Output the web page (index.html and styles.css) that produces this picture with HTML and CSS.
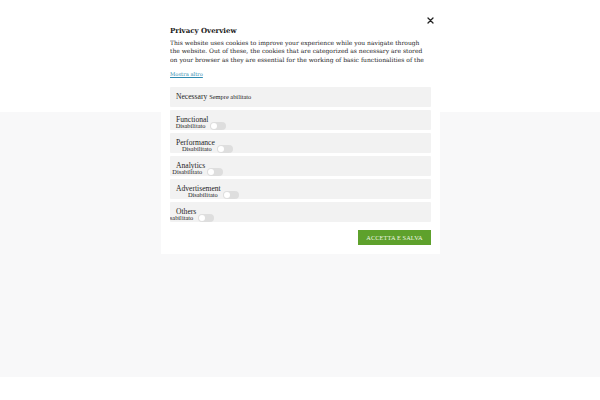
FILE: index.html
```html
<!DOCTYPE html>
<html lang="it">
<head>
<meta charset="utf-8">
<title>Privacy Overview</title>
<link rel="stylesheet" href="styles.css">
</head>
<body>
<div class="page">
  <div class="top"></div>
  <div class="band"></div>
  <div class="bottom"></div>
</div>
<div class="modal">
  <button class="close" aria-label="Chiudi">
    <svg width="7" height="7" viewBox="0 0 7 7"><path d="M1 1L6 6M6 1L1 6" stroke="#222" stroke-width="1.3" stroke-linecap="round"/></svg>
  </button>
  <h2 class="title">Privacy Overview</h2>
  <p class="text">This website uses cookies to improve your experience while you navigate through the website. Out of these, the cookies that are categorized as necessary are stored on your browser as they are essential for the working of basic functionalities of the website. We also use third-party cookies that help us analyze and understand how you use this website. These cookies will be stored in your browser only with your consent.</p>
  <a class="more" href="#">Mostra altro</a>
  <div class="list">
    <div class="row row-static"><span class="name">Necessary</span> <span class="always">Sempre abilitato</span></div>
    <div class="row"><div class="lab"><div class="name">Functional</div><div class="state"><span>Disabilitato</span></div></div><span class="toggle"></span></div>
    <div class="row"><div class="lab"><div class="name">Performance</div><div class="state"><span>Disabilitato</span></div></div><span class="toggle"></span></div>
    <div class="row"><div class="lab"><div class="name">Analytics</div><div class="state"><span>Disabilitato</span></div></div><span class="toggle"></span></div>
    <div class="row"><div class="lab"><div class="name">Advertisement</div><div class="state"><span>Disabilitato</span></div></div><span class="toggle"></span></div>
    <div class="row"><div class="lab"><div class="name">Others</div><div class="state"><span>Disabilitato</span></div></div><span class="toggle"></span></div>
  </div>
  <div class="actions"><button class="save">ACCETTA E SALVA</button></div>
</div>
</body>
</html>
```
FILE: styles.css
```css
html, body {
  margin: 0;
  padding: 0;
  background: #fff;
}
body {
  width: 600px;
  height: 400px;
  overflow: hidden;
  position: relative;
  font-family: "DejaVu Serif", serif;
  color: #212121;
}
.page {
  display: flex;
  flex-direction: column;
}
.top { height: 112px; }
.band { height: 265px; background: #f8f8f9; }
.bottom { height: 23px; }

.modal {
  position: absolute;
  left: 161px;
  top: 0;
  width: 279px;
  box-sizing: border-box;
  padding: 25.5px 9px 9px;
  background: #fff;
  font-size: 6px;
}
.close {
  position: absolute;
  top: 16.5px;
  right: 6px;
  width: 7px;
  height: 7px;
  padding: 0;
  border: 0;
  background: none;
  display: block;
}
.close svg { display: block; }
.title {
  margin: 0;
  font-size: 7px;
  line-height: 10px;
  font-weight: bold;
  color: #1a1a1a;
}
.text {
  margin: 3.3px 0 0;
  font-size: 6px;
  line-height: 8.5px;
  max-height: 25.5px;
  overflow: hidden;
  color: #1e1e1e;
}
.more {
  display: block;
  width: max-content;
  margin-top: 5.5px;
  font-size: 5.2px;
  line-height: 8px;
  color: #2f8ab0;
  text-decoration: underline;
}
.list {
  margin-top: 9px;
  display: flex;
  flex-direction: column;
  gap: 3px;
}
.row {
  height: 20px;
  box-sizing: border-box;
  background: #f2f2f2;
  border-radius: 1px;
  overflow: hidden;
  display: flex;
  align-items: flex-start;
  padding: 6px 0 0 6px;
  font-family: "Liberation Serif", serif;
  color: #1e1e1e;
}
.row-static {
  align-items: center;
  padding-top: 0;
  gap: 2px;
}
.row-static .name { font-size: 7.6px; }
.always { font-size: 6.4px; }
.lab {
  display: flex;
  flex-direction: column;
  flex: none;
}
.lab .name {
  font-size: 7.6px;
  line-height: 7px;
  white-space: nowrap;
}
.state {
  contain: inline-size;
  display: flex;
  justify-content: flex-end;
  padding-right: 3px;
  font-size: 6.4px;
  line-height: 5px;
  white-space: nowrap;
}
.state span { flex: none; }
.toggle {
  flex: none;
  position: relative;
  width: 16px;
  height: 8px;
  margin: 6px 0 0 2px;
  border-radius: 4px;
  background: #dedede;
}
.toggle::after {
  content: "";
  position: absolute;
  left: 1px;
  top: 1px;
  width: 6px;
  height: 6px;
  border-radius: 50%;
  background: #fff;
}
.actions {
  margin-top: 8.7px;
  display: flex;
  justify-content: flex-end;
}
.save {
  width: 73px;
  height: 15px;
  padding: 0;
  border: 0;
  background: #5ea12c;
  color: #eef6e4;
  font-family: "Liberation Serif", serif;
  font-size: 6.3px;
  letter-spacing: 0.1px;
}
```
